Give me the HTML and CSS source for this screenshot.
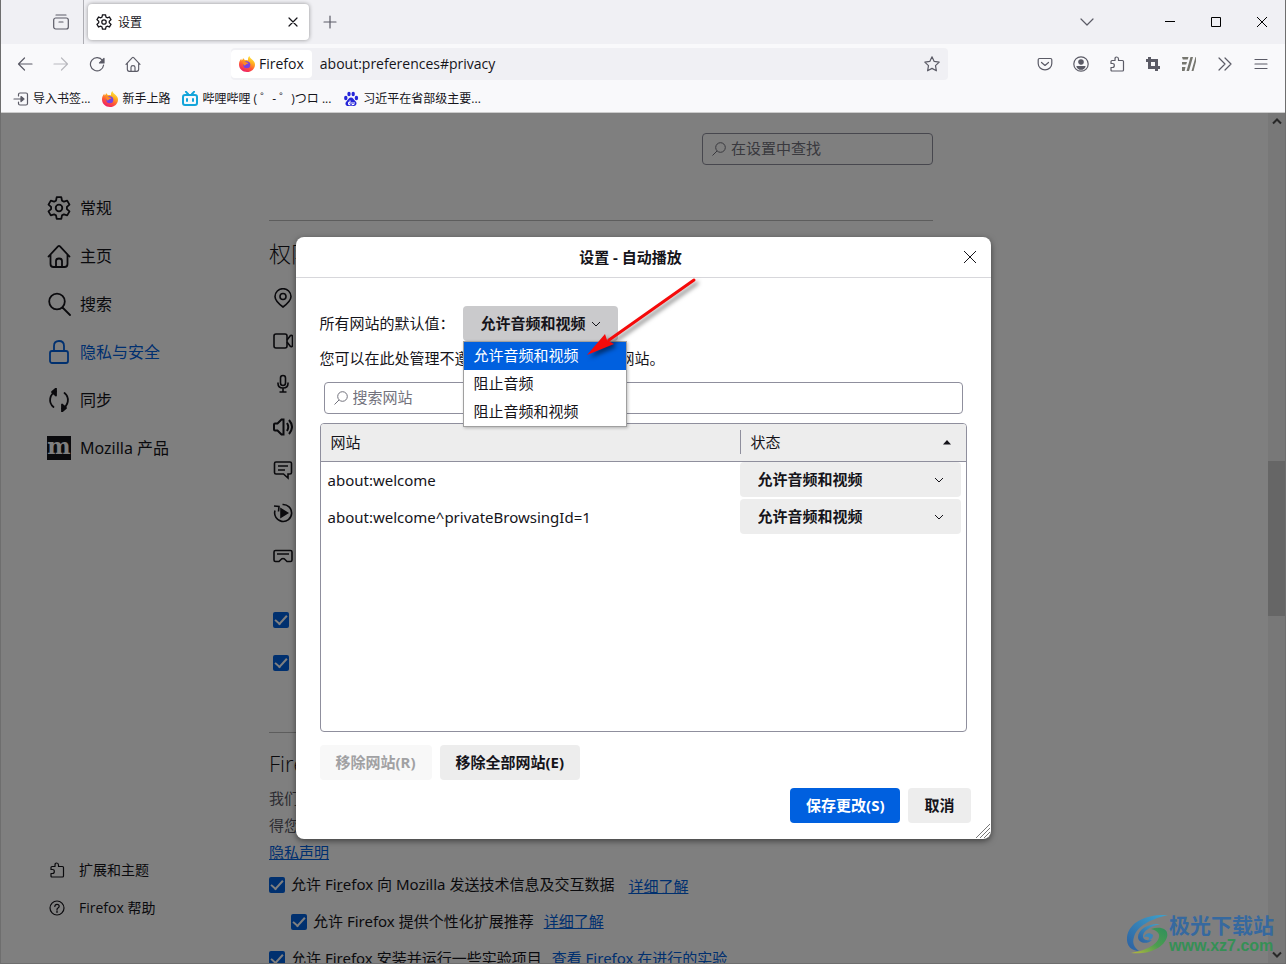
FILE: index.html
```html
<!DOCTYPE html>
<html lang="zh-CN">
<head>
<meta charset="utf-8">
<title>设置</title>
<link rel="stylesheet" href="styles.css">
</head>
<body>
<svg class="defs" aria-hidden="true">
  <defs>
    <linearGradient id="flame" x1="0.8" y1="0" x2="0.3" y2="1">
      <stop offset="0" stop-color="#fff04a"/><stop offset="0.35" stop-color="#ffb01f"/><stop offset="0.65" stop-color="#ff5a36"/><stop offset="1" stop-color="#ec1a6b"/>
    </linearGradient>
    <linearGradient id="swooshBlue" x1="0" y1="1" x2="1" y2="0">
      <stop offset="0" stop-color="#2c5fa0"/><stop offset="1" stop-color="#3fa3cc"/>
    </linearGradient>
    <linearGradient id="swooshGreen" x1="0" y1="1" x2="1" y2="0">
      <stop offset="0" stop-color="#b9b83c"/><stop offset="0.5" stop-color="#4c9d50"/><stop offset="1" stop-color="#2f8f5c"/>
    </linearGradient>
    <symbol id="gear" viewBox="0 0 24 24">
      <path d="M9.7 1.2h4.6L15 4.600l1.900 1.100 3.300-1.100 2.300 4-2.600 2.300v2.200l2.600 2.300-2.300 4-3.300-1.100-1.900 1.100-.7 3.400H9.700L9 19.400l-1.900-1.100-3.300 1.100-2.300-4 2.600-2.300v-2.200L1.500 8.600l2.300-4 3.300 1.100L9 4.600z"/><circle cx="12" cy="12" r="3.300"/>
    </symbol>
    <symbol id="home" viewBox="0 0 24 24">
      <path d="M1.500 12.500 11 2.400q1-1 2 0l9.500 10.100M3.500 10.500V20q0 3 3 3h11q3 0 3-3v-9.500M9 23v-6q0-2.500 3-2.500t3 2.500v6"/>
    </symbol>
    <symbol id="search" viewBox="0 0 24 24"><circle cx="10" cy="9.500" r="7.800"/><path d="m15.500 15.500 7.500 7.500"/></symbol>
    <symbol id="find" viewBox="0 0 16 16"><circle cx="9.500" cy="6.500" r="4.800"/><path d="M6 10 1.500 14.500"/></symbol>
    <symbol id="lock" viewBox="0 0 24 24"><rect x="3" y="11" width="18" height="12" rx="2"/><path d="M7 11V6q0-5 5-5t5 5v5"/></symbol>
    <symbol id="puzzle" viewBox="0 0 16 16">
      <path d="M2 7.500V5.500q0-1 1-1h3V3q0-2 1.700-2t1.800 2v1.500h4q1 0 1 1v8.500q0 1-1 1H3q-1 0-1-1v-2.500h1.500q1.800 0 1.800-2t-1.800-2z"/>
    </symbol>
    <symbol id="firefox" viewBox="0 0 16 16">
      <path fill="url(#flame)" d="M10.500 0c.2 1.500 1.100 2.200 2.300 3.200C14.800 4.900 16 6.300 16 8.700c0 4-3.500 7.300-8 7.300s-8-3.300-8-7.500C0 6 .9 4.200 2.200 2.800l.5 1.700 1.100-1.200L4 1.900l2 2.300c1.200-.4 2.200-.2 3 .2C8.800 2.600 9.300.9 10.500 0z"/>
      <circle cx="7.800" cy="8.700" r="3.500" fill="#7542e5"/>
      <path fill="#ff8a24" d="M3.500 6.500c1.500-1.300 3-1 4.400 0L9.500 7c-.6 1.200-2.300 1-2.800 1.700-.5 1-1.600.8-1.800.3z"/>
    </symbol>
    <symbol id="chevron" viewBox="0 0 10 10"><path d="m1 3 4 4 4-4"/></symbol>
  </defs>
</svg>

<header class="chrome">
  <div class="tabbar">
    <button class="view" aria-label="概览"><svg class="i16 line" viewBox="0 0 16 16"><path d="M3 1h10"/><rect x=".7" y="4" width="14.600" height="11" rx="2"/><path d="M6 8h4"/></svg></button>
    <div class="tab">
      <svg class="i16 gear-small"><use href="#gear"/></svg>
      <span class="tab-title">设置</span>
      <button aria-label="关闭标签页"><svg class="i16 line" viewBox="0 0 16 16"><path d="m4 4 8 8m0-8-8 8"/></svg></button>
    </div>
    <button class="plus" aria-label="新标签页"><svg class="i16 line" viewBox="0 0 16 16"><path d="M8 2v12M2 8h12"/></svg></button>
    <button class="alltabs" aria-label="列出所有标签页"><svg class="i16 line" viewBox="0 0 16 16"><path d="m2 5 6 6 6-6"/></svg></button>
    <div class="winbuttons">
      <button aria-label="最小化"><svg class="i16" viewBox="0 0 16 16"><path d="M3 7.500h10"/></svg></button>
      <button aria-label="最大化"><svg class="i16" viewBox="0 0 16 16"><path d="M3.500 3.500h9v9h-9z"/></svg></button>
      <button aria-label="关闭"><svg class="i16" viewBox="0 0 16 16"><path d="m3 3 10 10m0-10L3 13"/></svg></button>
    </div>
  </div>

  <div class="navbar">
    <div class="navgroup">
      <button aria-label="后退"><svg class="i16 line" viewBox="0 0 16 16"><path d="M15 8H1.500M7.500 2l-6 6 6 6"/></svg></button>
      <button aria-label="前进" disabled><svg class="i16 line" viewBox="0 0 16 16"><path d="M1 8h13.500M8.500 2l6 6-6 6"/></svg></button>
      <button aria-label="刷新"><svg class="i16 line" viewBox="0 0 16 16"><path d="M13.500 4.500A6.600 6.600 0 1 0 14.600 9"/><path class="solid" d="M15 2.500V7h-4.500z"/></svg></button>
      <button aria-label="主页"><svg class="i16 line home-small"><use href="#home"/></svg></button>
    </div>
    <div class="urlbar">
      <button class="identity"><svg class="i16"><use href="#firefox"/></svg>Firefox</button>
      <input class="url" aria-label="网址" value="about:preferences#privacy">
      <button class="star" aria-label="添加书签"><svg class="i16 line" viewBox="0 0 16 16"><path d="m8 .8 2.200 4.600 5 .7-3.700 3.500.9 5.200L8 12.400l-4.400 2.400.9-5.200L.8 6.100l5-.7z"/></svg></button>
    </div>
    <div class="navgroup tools">
      <button aria-label="Pocket"><svg class="i16 line" viewBox="0 0 16 16"><path d="M2.500 2.500h11q1.300 0 1.300 1.300V7.500a6.800 6.300 0 0 1-13.600 0V3.800q0-1.300 1.300-1.300z"/><path d="m4.500 6.500 3.500 3 3.500-3"/></svg></button>
      <button aria-label="账户"><svg class="i16 line" viewBox="0 0 16 16"><circle cx="8" cy="8" r="7.200"/><circle class="solid" cx="8" cy="6" r="2.200"/><path class="solid" d="M4 10.500h8q-1 2.700-4 2.700t-4-2.700z"/></svg></button>
      <button aria-label="扩展"><svg class="i16 line"><use href="#puzzle"/></svg></button>
      <button aria-label="截图"><svg class="i16 crop" viewBox="0 0 16 16"><path d="M1 4.500h10.500V15M4.500 1v10.500H15"/></svg></button>
      <button aria-label="笔记"><svg class="i16 notes" viewBox="0 0 16 16"><path d="M1 1h6.500L6.700 3.500H1.800zM1 6h5L5.200 8.500H1zM1 11h3.500l-.9 4H1zM9.500 1H12L8 15H5.500zM14.500 1H15v4.500L12.500 15H10.500z"/></svg></button>
      <button aria-label="更多工具"><svg class="i16 line" viewBox="0 0 16 16"><path d="m2 2 6 6-6 6M8 2l6 6-6 6"/></svg></button>
      <button aria-label="应用程序菜单"><svg class="i16 line" viewBox="0 0 16 16"><path d="M2 3.500h12M2 8h12M2 12.500h12"/></svg></button>
    </div>
  </div>

  <nav class="bookmarks">
    <a href="#"><svg class="i16 line import" viewBox="0 0 16 16"><path d="M5.500 5V3.500Q5.500 2 7 2h6q1.500 0 1.500 1.500v9q0 1.500-1.500 1.500H7q-1.500 0-1.500-1.500V11M1 8h8.500"/><path class="solid" d="m8 5.500 3 2.500-3 2.500z"/></svg>导入书签...</a>
    <a href="#"><svg class="i16"><use href="#firefox"/></svg>新手上路</a>
    <a href="#"><svg class="i16 bili" viewBox="0 0 16 16"><rect x="1" y="4" width="14" height="10" rx="2"/><path d="M4 .8 6 3M12 .8 10 3M5 8v2M11 8v2"/></svg>哔哩哔哩 ( ゜- ゜)つロ ...</a>
    <a href="#"><svg class="i16 baidu" viewBox="0 0 16 16"><ellipse cx="2.800" cy="7" rx="1.700" ry="2.200"/><ellipse cx="6" cy="3" rx="1.700" ry="2.300"/><ellipse cx="10.200" cy="3" rx="1.700" ry="2.300"/><ellipse cx="13.400" cy="7" rx="1.700" ry="2.200"/><path d="M8 6.500c2 0 2.700 2.200 4.500 3.800 2.200 2.200.5 4.900-1.800 4.600-1.800-.3-3.600-.3-5.400 0-2.600.3-3.800-2.500-1.900-4.500C5.400 8.700 6 6.500 8 6.500z"/><path class="cut" d="M7 9.500v4H5.500v-2.200H7M9 11v2.500h2V11"/></svg>习近平在省部级主要...</a>
  </nav>
</header>

<div class="viewport">
  <div class="page">
    <aside class="sidebar">
      <nav class="categories">
        <a href="#"><svg class="i24"><use href="#gear"/></svg>常规</a>
        <a href="#"><svg class="i24"><use href="#home"/></svg>主页</a>
        <a href="#"><svg class="i24"><use href="#search"/></svg>搜索</a>
        <a href="#" class="current"><svg class="i24"><use href="#lock"/></svg>隐私与安全</a>
        <a href="#"><svg class="i24" viewBox="0 0 24 24"><path d="M9 3.500A9 9 0 0 0 6.500 19M15 20.500A9 9 0 0 0 17.500 5"/><path class="solid" d="M9 .5v7l-4-3.500zM15 16.500v7l4-3.500z"/></svg>同步</a>
        <a href="#"><span class="moz">m</span>Mozilla 产品</a>
      </nav>
      <nav class="support">
        <a href="#"><svg class="i16 line"><use href="#puzzle"/></svg>扩展和主题</a>
        <a href="#"><svg class="i16 line" viewBox="0 0 16 16"><circle cx="8" cy="8" r="7"/><path d="M5.800 6.500q0-2.200 2.200-2.200t2.200 2q0 1-1.200 1.700T8 10"/><path d="M8 11.200v1.300"/></svg>Firefox 帮助</a>
      </nav>
    </aside>

    <main class="pane">
      <label class="field page-search"><svg class="i16"><use href="#find"/></svg><input type="search" placeholder="在设置中查找" aria-label="在设置中查找"></label>
      <section class="permissions">
        <h2>权限</h2>
        <ul>
          <li><svg class="i20" role="img" aria-label="位置" viewBox="0 0 20 20"><path d="M10 19Q2 13 2 8.500a8 7.800 0 0 1 16 0Q18 13 10 19z"/><circle cx="10" cy="8.500" r="3"/></svg></li>
          <li><svg class="i20" role="img" aria-label="摄像头" viewBox="0 0 20 20"><rect x="1" y="3" width="13" height="14" rx="2"/><path d="m14 9 3.500-4.500q2-.5 2 1v9q0 1.500-2 1L14 11"/></svg></li>
          <li><svg class="i20" role="img" aria-label="麦克风" viewBox="0 0 20 20"><rect x="7.500" y="1.500" width="5" height="10" rx="2.500"/><path d="M5 8.500v1q0 4.500 5 4.500t5-4.500v-1M10 14v4M6.500 18h7"/></svg></li>
          <li><svg class="i20 bold" role="img" aria-label="自动播放" viewBox="0 0 20 20"><path d="M1 7.500v5q0 1 1 1h2.500l4 4h2v-15h-2l-4 4H2q-1 0-1 1zM14 6q2.500 4 0 8M16 3q6 7 0 14"/></svg></li>
          <li><svg class="i20" role="img" aria-label="通知" viewBox="0 0 20 20"><path d="M3 2h14q1.500 0 1.500 1.500v9q0 1.500-1.500 1.500h-2v4l-4.500-4H3q-1.500 0-1.500-1.500v-9Q1.500 2 3 2zM5 6h10M5 10h7"/></svg></li>
          <li><svg class="i20" role="img" aria-label="播放控制" viewBox="0 0 20 20"><path d="M9.500 1.500A8.500 8.500 0 1 1 2 7.500M1 3l5 .5-.5 5"/><path class="solid" d="m8 6 6.500 4L8 14z"/></svg></li>
          <li><svg class="i20" role="img" aria-label="虚拟现实" viewBox="0 0 20 20"><path d="M2.500 4.500h15q1.500 0 1.500 1.500v8q0 1.500-1.500 1.500h-3.500L11.500 13q-1.500-1-3 0L6 15.500H2.500Q1 15.500 1 14V6q0-1.500 1.500-1.500zM4 8h12"/></svg></li>
        </ul>
        <div class="switches">
          <div><input type="checkbox" checked aria-label="阻止弹出式窗口"></div>
          <div><input type="checkbox" checked aria-label="当网站尝试安装附加组件时警告您"></div>
        </div>
      </section>
      <section class="data">
        <h2>Firefox 数据收集与使用</h2>
        <p>我们力图为您提供选择<br>得您的同意后接收信息</p>
        <a class="privacy" href="#">隐私声明</a>
        <div class="option"><label><input type="checkbox" checked>允许 Fi<u>r</u>efox 向 Mozilla 发送技术信息及交互数据</label><a href="#" class="far">详细了解</a></div>
        <div class="option nested"><label><input type="checkbox" checked>允许 Firefox 提供个性化扩展推荐</label><a href="#">详细了解</a></div>
        <div class="option"><label><input type="checkbox" checked>允许 Firefox 安装并运行一些实验项目</label><a href="#">查看 Firefox 在进行的实验</a></div>
      </section>
    </main>
  </div>

  <div class="scrollbar" aria-hidden="true">
    <svg viewBox="0 0 10 10"><path d="m1 7 4-4 4 4"/></svg>
    <div class="track"><div class="thumb"></div></div>
    <svg viewBox="0 0 10 10"><path d="m1 3 4 4 4-4"/></svg>
  </div>

  <div class="overlay">
    <section class="dialog" role="dialog" aria-labelledby="dialog-title">
      <header class="dialog-head">
        <h1 id="dialog-title">设置 - 自动播放</h1>
        <button aria-label="关闭对话框"><svg class="i16" viewBox="0 0 16 16"><path d="m2 2 12 12m0-12L2 14"/></svg></button>
      </header>
      <div class="dialog-body">
        <div class="default-row">
          <label for="default-choice">所有网站的默认值：</label>
          <div class="picker open">
            <select id="default-choice"><option>允许音频和视频</option></select>
            <svg class="i10"><use href="#chevron"/></svg>
            <ul class="menu" role="listbox" aria-label="默认值选项">
              <li role="option" aria-selected="true">允许音频和视频</li>
              <li role="option">阻止音频</li>
              <li role="option">阻止音频和视频</li>
            </ul>
          </div>
        </div>
        <p class="hint">您可以在此处管理不遵循默认自动播放规则的网站。</p>
        <label class="field site-search"><svg class="i16"><use href="#find"/></svg><input type="search" placeholder="搜索网站" aria-label="搜索网站"></label>
        <div class="sites">
          <table>
            <thead><tr><th>网站</th><th class="status"><span>状态<svg class="i10 sort" viewBox="0 0 10 10"><path d="M1 7.500h8L5 3z"/></svg></span></th></tr></thead>
            <tbody>
              <tr><td>about:welcome</td><td><div class="picker"><select aria-label="about:welcome 的状态"><option>允许音频和视频</option></select><svg class="i10"><use href="#chevron"/></svg></div></td></tr>
              <tr><td>about:welcome^privateBrowsingId=1</td><td><div class="picker"><select aria-label="隐私浏览的状态"><option>允许音频和视频</option></select><svg class="i10"><use href="#chevron"/></svg></div></td></tr>
            </tbody>
          </table>
        </div>
        <div class="actions">
          <button class="btn" disabled>移除网站(R)</button>
          <button class="btn">移除全部网站(E)</button>
        </div>
      </div>
      <footer class="dialog-foot">
        <button class="btn primary">保存更改(S)</button>
        <button class="btn">取消</button>
      </footer>
      <svg class="grip" viewBox="0 0 16 16"><path d="M1 15 15 1M5 15 15 5M9 15l6-6M13 15l2-2"/></svg>
      <svg class="arrow" viewBox="0 0 120 90"><path d="M109 6 24 66"/><polygon points="2,81 20,60 22,66 29,70"/></svg>
    </section>
  </div>

  <div class="watermark">
    <svg viewBox="0 0 42 42"><path fill="url(#swooshBlue)" d="M42 2C20 1 3 9 1 24c-1 9 5 14 12 14-5-4-7-8-5-14C11 13 25 6 42 2z"/><path fill="url(#swooshBlue)" d="M34 11c-11-1-22 5-22 13 0 6 9 8 14 3-5 1-9 0-9-4 0-5 8-10 17-12z"/><path fill="#3c86b8" d="M18 24c1-4 6-5 9-2 0 3-2 5-5 5 2-1 2-4-4-3z"/><path fill="url(#swooshGreen)" d="M25 16c10-3 18 0 16 8C38 35 22 42 5 40c12-2 26-7 28-16 1-4-3-7-8-8z"/></svg>
    <div><strong>极光下载站</strong><span>www.xz7.com</span></div>
  </div>
</div>
</body>
</html>
```
FILE: styles.css
```css
* { box-sizing: border-box; }
body {
  margin: 0;
  height: 100vh;
  display: flex;
  flex-direction: column;
  overflow: hidden;
  border: 1px solid #6e6e6e;
  border-top: 0;
  color: #15141a;
  font: 15px/20px "Noto Sans", "Noto Sans CJK SC", sans-serif;
}
.defs { position: absolute; width: 0; height: 0; }
button, input, select { font: inherit; color: inherit; }
button { border: 0; background: none; padding: 0; }
button svg, a svg { flex: none; }
svg { display: block; fill: none; stroke: currentColor; }
ul { list-style: none; margin: 0; padding: 0; }
p, h1, h2 { margin: 0; }
a { color: inherit; text-decoration: none; }
.i10 { width: 10px; height: 10px; }
.i16 { width: 16px; height: 16px; flex: none; }
.i20 { width: 20px; height: 20px; stroke-width: 1.6; }
.i20.bold { stroke-width: 2; }
.i24 { width: 24px; height: 24px; stroke-width: 1.8; stroke-linejoin: round; stroke-linecap: round; }
.line { stroke-width: 1.2; stroke-linecap: round; stroke-linejoin: round; }
.solid { fill: currentColor; }
#firefox, #firefox * { stroke: none; }

/* Browser chrome */
.chrome { flex: none; background: #f9f9fb; border-bottom: 1px solid #ccc; font-family: "Open Sans", "Noto Sans CJK SC", sans-serif; }
.chrome button { display: flex; align-items: center; justify-content: center; color: #5b5b66; }
.tabbar { display: flex; align-items: center; height: 44px; background: #f0f0f4; }
.view { width: 83px; height: 44px; padding-left: 38px; border-right: 1px solid #aeaeb4; }
.tab {
  display: flex; align-items: center; gap: 6px;
  width: 221px; height: 36px; margin-left: 4px; padding: 0 8px;
  background: #fff; border-radius: 4px; box-shadow: 0 0 4px rgba(0, 0, 0, .4);
}
.tab-title { flex: 1; padding-top: 2px; font-size: 12px; }
.gear-small { stroke-width: 1.9; }
.home-small { stroke-width: 1.7; }
.chrome .tab button { color: #15141a; }
.plus { width: 42px; height: 36px; }
.alltabs { width: 36px; height: 36px; margin-left: auto; margin-right: 42px; }
.winbuttons { display: flex; }
.winbuttons button { width: 46px; height: 44px; color: #000; }
.navbar { display: flex; align-items: center; height: 40px; padding: 0 6px; }
.navgroup { display: flex; }
.navgroup button { width: 36px; height: 32px; }
.navgroup button:disabled { opacity: .4; }
.urlbar {
  display: flex; align-items: center; flex: 0 1 717px; height: 32px;
  margin: 0 auto 0 80px; padding: 2px 2px 2px 0; background: #f0f0f4; border-radius: 4px;
}
.chrome .identity { gap: 4px; height: 28px; padding: 0 8px; background: #fff; border-radius: 4px; color: #15141a; font-size: 14px; }
.url { flex: 1; min-width: 0; height: 28px; padding: 0 8px 2px; border: 0; background: none; font-size: 14px; }
.star { width: 28px; height: 28px; }
.crop { stroke-width: 3; }
.notes { fill: #76766f; stroke: none; }
.bookmarks { display: flex; align-items: center; gap: 12px; height: 28px; padding: 2px 0 0 12px; font-size: 12px; }
.bookmarks a { display: flex; align-items: center; gap: 4px; height: 26px; white-space: pre; }
.import { color: #5b5b66; }
.bili { stroke: #14a5da; stroke-width: 2; stroke-linecap: round; }
.baidu { fill: #2626d9; stroke: none; }
.baidu .cut { fill: none; stroke: #fff; }

/* Settings page */
.viewport { position: relative; flex: 1; min-height: 0; display: flex; overflow: hidden; background: #fff; }
.page { flex: 1; min-width: 0; display: flex; }
.sidebar { flex: none; width: 268px; padding: 71px 0 36px 46px; display: flex; flex-direction: column; justify-content: space-between; }
.categories a { display: flex; align-items: center; gap: 9px; height: 48px; font-size: 16px; }
.categories .current { color: #0060df; }
.moz { width: 24px; height: 24px; background: #15141a; color: #fff; font: bold 22px/20px "DejaVu Serif", serif; display: flex; justify-content: center; }
.support a { display: flex; align-items: center; gap: 14px; height: 38px; padding-left: 2px; font-family: "Open Sans", "Noto Sans CJK SC", sans-serif; font-size: 14px; }
.pane { width: 664px; padding-top: 20px; display: flex; flex-direction: column; }
.pane > * { flex: none; }
.field { display: flex; align-items: center; gap: 4px; height: 32px; padding: 0 8px; border: 1px solid #8f8f9d; border-radius: 4px; color: #72727c; }
.field input { flex: 1; min-width: 0; padding: 0 0 2px; border: 0; outline: 0; background: none; }
.field input::placeholder { color: #72727c; opacity: 1; }
.page-search { align-self: flex-end; width: 231px; }
.pane h2 { font-family: "Open Sans", "Noto Sans CJK SC", sans-serif; font-size: 22px; font-weight: 300; line-height: 32px; white-space: nowrap; }
.permissions { margin-top: 55px; padding-top: 16px; border-top: 1px solid #bbb; }
.permissions ul { padding: 7px 0 0 4px; }
.permissions li, .switches div { display: flex; align-items: center; height: 43px; }
.switches { padding: 21px 0 0 4px; }
.data { margin-top: 48px; padding-top: 14px; border-top: 1px solid #bbb; line-height: 27px; }
.data p { margin-top: 6px; color: #5b5b66; }
.data a { color: #0060df; text-decoration: underline; }
.privacy { display: block; width: max-content; }
.option { display: flex; align-items: center; gap: 10px; height: 37px; white-space: nowrap; }
.option label { display: flex; align-items: center; white-space: pre; }
.option input { margin-right: 6px; }
.option .far { margin-left: 4px; padding-top: 4px; }
.nested { padding-left: 22px; }
.pane input[type="checkbox"] {
  appearance: none; flex: none; width: 16px; height: 16px; margin-top: 0; margin-bottom: 0; margin-left: 0;
  display: grid; place-items: center; background: #0060df; border-radius: 2px;
}
.pane input[type="checkbox"]::before { content: ""; width: 10px; height: 5px; margin-bottom: 3px; border: solid #fff; border-width: 0 0 2px 2px; transform: rotate(-48deg); }
.scrollbar { flex: none; width: 17px; display: flex; flex-direction: column; align-items: center; justify-content: space-between; background: #f0f0f0; }
.scrollbar svg { width: 10px; height: 17px; stroke: #505050; stroke-width: 2; }
.track { flex: 1; width: 100%; padding-top: 331px; }
.thumb { height: 155px; background: #cdcdcd; }

/* Dialog */
.overlay { position: absolute; inset: 0; display: grid; place-items: center; background: rgba(0, 0, 0, .5); }
.dialog { position: relative; width: 695px; background: #fff; border-radius: 8px; box-shadow: 0 2px 6px rgba(0, 0, 0, .5); }
.dialog-head { display: flex; align-items: center; height: 41px; padding: 0 5px 0 12px; border-bottom: 1px solid #d7d7db; }
.dialog-head h1 { flex: 1; font-size: 15px; line-height: 20px; text-align: center; }
.dialog-head button { width: 32px; height: 32px; display: grid; place-items: center; }
.dialog-body { padding: 28px 24px 0; }
.default-row { display: flex; align-items: center; gap: 8px; }
.default-row label { padding-bottom: 2px; }
.picker { position: relative; width: 221px; }
.picker select { appearance: none; display: block; width: 100%; height: 35px; padding: 0 18px 2px; border: 0; border-radius: 4px; background: #ededed; font-weight: bold; }
.picker > svg { position: absolute; right: 17px; top: 13px; pointer-events: none; }
.picker.open { width: 155px; }
.picker.open select { background: #cacacc; }
.menu { position: absolute; z-index: 1; top: 35px; left: 0; width: 164px; background: #fff; border: 1px solid #a0a0a0; box-shadow: 1px 1px 3px rgba(0, 0, 0, .25); }
.menu li { height: 28px; padding: 0 10px; line-height: 26px; }
.menu [aria-selected="true"] { background: #0060df; color: #fff; }
.hint { margin-top: 7px; }
.site-search { margin: 14px 4px 9px; }
.sites { height: 309px; border: 1px solid #8f8f9d; border-radius: 4px; overflow: hidden; }
.sites table { width: 100%; border-collapse: collapse; }
.sites th { height: 37px; padding: 0 10px; text-align: left; font-weight: normal; background: #ededed; border-bottom: 1px solid #8f8f9d; }
.sites .status { width: 226px; padding: 0 14px 0 0; }
.status span { display: flex; align-items: center; justify-content: space-between; height: 24px; padding-left: 10px; border-left: 1px solid #8f8f9d; }
.sort { fill: #15141a; stroke: none; }
.sites td { height: 37px; padding: 0 0 0 7px; }
.sites td + td { padding: 0; }
.actions { display: flex; gap: 8px; margin-top: 13px; }
.btn { height: 35px; padding: 0 16px 2px; border-radius: 4px; background: #ededed; font-weight: bold; }
.btn:disabled { background: #f8f8f8; color: #a1a1a3; }
.primary { background: #0060df; color: #fff; }
.dialog-foot { display: flex; justify-content: flex-end; gap: 8px; padding: 8px 20px 16px; }
.grip { position: absolute; right: 0; bottom: 0; width: 16px; height: 16px; color: #777; }
.arrow { position: absolute; z-index: 2; left: 289px; top: 37px; width: 120px; height: 90px; stroke: #f50a0a; stroke-width: 3; stroke-linecap: round; filter: drop-shadow(3px 3px 2px rgba(0, 0, 0, .5)); }
.arrow polygon { fill: #f50a0a; stroke: none; }

.watermark { position: absolute; right: 11px; bottom: 8px; display: flex; align-items: center; gap: 1px; }
.watermark svg { width: 42px; height: 42px; stroke: none; }
.watermark div { display: flex; flex-direction: column; }
.watermark strong { color: #36699f; font-size: 21px; line-height: 24px; }
.watermark span { color: #359055; font: bold 16px/18px "Liberation Sans", "Noto Sans CJK SC", sans-serif; }
```
